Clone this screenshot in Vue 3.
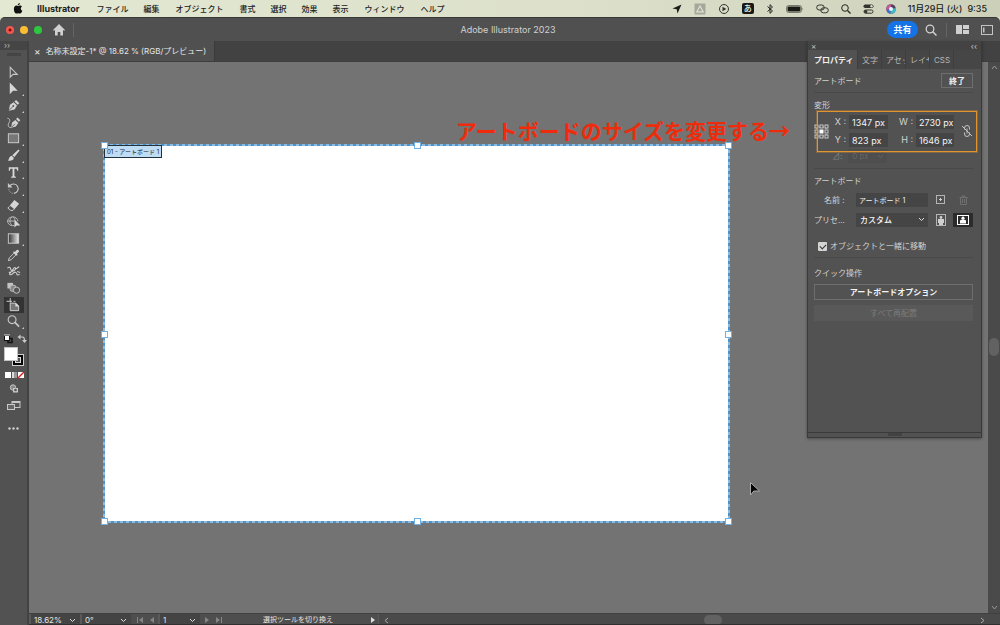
<script setup>
import { ref } from 'vue'

const menus = [
  { label: 'ファイル' },
  { label: '編集' },
  { label: 'オブジェクト', wide: true },
  { label: '書式' },
  { label: '選択' },
  { label: '効果' },
  { label: '表示' },
  { label: 'ウィンドウ', wide: true },
  { label: 'ヘルプ' },
]

const tools = [
  { name: '選択', art: '<path d="M4.500 2.500v10.500l3-3h4.500z" fill="none" stroke="#c8c8c8" stroke-width="1.100"/>' },
  { name: 'ダイレクト選択', more: true, art: '<path d="M4 1.500v12.500l3.500-3.500h5z" fill="#d6d6d6"/>' },
  { name: 'ペン', more: true, art: '<path d="M3 13.500l1.200-6.200 4-2.800 3.500 3.500-2.500 4.200-6.200 1.300z" fill="#d2d2d2"/><path d="M3.200 13.200l4.300-4.300" stroke="#555" stroke-width=".9"/><circle cx="7.800" cy="8.500" r="1" fill="#555"/><path d="M9 3.800l1.700-1.700 3.500 3.500-1.700 1.700z" fill="#d2d2d2"/>' },
  { name: '曲線', art: '<path d="M5.500 13.500l1-5.500 3.500-2.800 3.200 3.200-2.700 3.800z" fill="#d2d2d2"/><path d="M10.700 4.300l1.600-1.600 3 3-1.600 1.600z" fill="#d2d2d2"/><path d="M5.700 13.300l3.800-3.800" stroke="#555" stroke-width=".9"/><path d="M1.500 3.500c3 .5 3 2.500 1.800 4.500s-2 5.500 2.500 5.500" fill="none" stroke="#c4c4c4"/>' },
  { name: '長方形', more: true, art: '<rect x="2.500" y="3" width="11" height="9.500" fill="#777" stroke="#cfcfcf"/>' },
  { name: 'ブラシ', more: true, art: '<path d="M13.300 1.500l1.200 1.200-5.500 7-2.300-2zM6 8.300l2.300 2.200c0 3-3.300 3.500-6.300 3 1.500-1 1-4.500 4-5.200z" fill="#d6d6d6"/>' },
  { name: '文字', more: true, art: '<path d="M3 2.500h10v3.500h-1.200l-.5-2H9v8l1.500.5v1h-5v-1L7 12V4H4.700l-.5 2H3z" fill="#d8d8d8"/>' },
  { name: '回転', more: true, art: '<path d="M4 5.200a5 5 0 1 1 4.500 8" fill="none" stroke="#c8c8c8" stroke-width="1.200"/><path d="M2 2v5h5z" fill="#c8c8c8"/><path d="M3 8.500a5 5 0 0 0 5.500 4.700" fill="none" stroke="#b8b8b8" stroke-dasharray="1 1"/>' },
  { name: '消しゴム', more: true, art: '<path d="M9 2l5 4-5 6-5-4z" fill="#d6d6d6"/><path d="M3.700 8.800L2 10.800l3 2.400h2.500l1.200-1.400" fill="none" stroke="#d0d0d0"/>' },
  { name: 'シェイプ形成', art: '<path d="M9 12.200a5.500 4.700 0 1 1 3.700-4.500M1.500 7.500H9M6.500 3c-3 2-3 7 0 9.200M7.500 3c1.500 1 2 2 2 3" fill="none" stroke="#bcbcbc"/><path d="M9 5.500v9l2.200-2.200h4z" fill="#d6d6d6"/>' },
  { name: 'グラデーション', more: true, art: '<defs><linearGradient id="tg"><stop offset="0" stop-color="#333"/><stop offset="1" stop-color="#e8e8e8"/></linearGradient></defs><rect x="2.500" y="3" width="11" height="10" fill="url(#tg)" stroke="#cfcfcf"/>' },
  { name: 'スポイト', art: '<path d="M2.500 13.500l1-3L8.500 5.500l2 2-5 5z" fill="none" stroke="#cfcfcf"/><path d="M7.500 4.500l1-1 1 .8 2-2.300c1-.8 3 1.100 2.300 2L11.500 6.200l1 1-1 1z" fill="#d6d6d6"/>' },
  { name: 'パペットワープ', art: '<path d="M1.500 4.500c2-2 3-1 3.500 1s2 1.500 3-.5 2.500-1.500 2 0.500-4.500 2-6 4.500c-.5 2 1.500 2 3.500 0s3.500-1.500 4 .5c0 1.500 1.500 1.500 3 .5M9.500 6l4.500-3M3 9l4-1M12 8l3 1" fill="none" stroke="#cfcfcf" stroke-width="1.200"/>' },
  { name: 'ブレンド', art: '<rect x="1.500" y="2" width="6" height="6" fill="#c4c4c4"/><rect x="4.500" y="4.500" width="6" height="6.500" rx="2" fill="#888" stroke="#bdbdbd"/><circle cx="11.200" cy="9.800" r="3.300" fill="#555" stroke="#c8c8c8"/>' },
  { name: 'アートボード', active: true, art: '<path d="M4.500 0v5M.5 3.500h6M8 3.500h2" fill="none" stroke="#d0d0d0"/><path d="M4.500 5.500h6l3 3v5h-9z" fill="#777" stroke="#d8d8d8"/><path d="M10 5v4h4z" fill="#ddd"/>' },
  { name: 'ズーム', more: true, art: '<circle cx="6.500" cy="6" r="4.200" fill="none" stroke="#c8c8c8" stroke-width="1.200"/><path d="M9.500 9l4.500 4.500" stroke="#c8c8c8" stroke-width="1.800"/>' },
]

const x = ref('1347 px')
const y = ref('823 px')
const w = ref('2730 px')
const h = ref('1646 px')
const boardName = ref('アートボード 1')
const moveTogether = ref(true)
const handles = ['nw', 'n', 'ne', 'e', 'se', 's', 'sw', 'w']
const panelTabs = ['文字', 'アセッ', 'レイヤ', 'CSS']
</script>

<template>
  <div class="screen" lang="ja">
    <nav class="menubar">
      <svg class="apple" viewBox="0 0 20 24" aria-hidden="true"><path d="M14 0c.3 3-2 5-4.500 5C9.300 2.500 11.500.3 14 0zM10 6.500c1 0 2.300-1 4.300-1 2 0 3.500 1 4.400 2.300-4 2.400-3.300 7.600.8 9.200-1.200 3-3 6-5 6-1.500 0-2.300-.9-4-.9-1.800 0-2.700.9-4.200.9C3.500 23 1 18 1 13.500 1 8.500 3.600 5.600 6.500 5.600c1.500 0 2.700.9 3.500.9z" /></svg>
      <button class="app-name">Illustrator</button>
      <button v-for="m in menus" :key="m.label" :class="{ wide: m.wide }">{{ m.label }}</button>
      <div class="extras">
        <svg width="10" height="10" viewBox="0 0 10 10"><path d="M9.500.5L5.500 9.500 4.700 5.300.5 4.500z" fill="#1c1d18" /></svg>
        <svg width="12" height="12" viewBox="0 0 12 12"><rect x=".5" y=".5" width="11" height="11" rx="1" fill="#a5a79a" /><path d="M6 3L2.800 8.800h6.400z" fill="none" stroke="#dfe1d2" stroke-width="1.200" /></svg>
        <svg width="12" height="12" viewBox="0 0 12 12"><circle cx="6" cy="6" r="4.500" fill="none" stroke="#33342e" /><path d="M4.500 3.800v4.400L8.300 6z" fill="#33342e" /></svg>
        <span class="ime">あ</span>
        <svg width="8" height="12" viewBox="0 0 8 12"><path d="M1.500 3.500l5 4.500L4 10.300V1.700L6.500 4l-5 4.500" fill="none" stroke="#22231e" /></svg>
        <svg width="18" height="10" viewBox="0 0 18 10"><rect x=".5" y="1.500" width="15" height="7" rx="2" fill="none" stroke="#777a6c" /><rect x="1.500" y="2.500" width="13" height="5" rx="1" fill="#191a16" /><path d="M16.500 3.500q1.500 1.500 0 3z" fill="#777a6c" /></svg>
        <svg width="13" height="12" viewBox="0 0 13 12"><rect x=".7" y="2" width="7.500" height="5" rx="2.500" fill="none" stroke="#33342e" /><rect x="4.800" y="4.800" width="7.500" height="5" rx="2.500" fill="none" stroke="#33342e" /></svg>
        <svg width="10" height="10" viewBox="0 0 10 10"><circle cx="4" cy="4" r="3.300" fill="none" stroke="#22231e" /><path d="M6.500 6.500l3 3" stroke="#22231e" stroke-width="1.200" /></svg>
        <svg width="11" height="10" viewBox="0 0 11 10"><rect x=".5" y=".5" width="10" height="3.500" rx="1.700" fill="#33342e" /><circle cx="8.500" cy="2.200" r="1.200" fill="#dde0cc" /><rect x="1" y="6" width="9" height="3.200" rx="1.600" fill="none" stroke="#33342e" /><circle cx="2.800" cy="7.600" r="1.600" fill="#33342e" /></svg>
        <svg width="10" height="10" viewBox="0 0 10 10"><circle cx="5" cy="5" r="4.800" fill="#51405f" /><path d="M5 .2A4.800 4.800 0 0 0 .5 6L5 5z" fill="#c65a9c" /><path d="M9.700 4A4.800 4.800 0 0 1 4 9.700L5 5z" fill="#3bbcc4" /><path d="M.5 6A4.800 4.800 0 0 0 4 9.700L5 5z" fill="#4272d8" /><circle cx="5" cy="5" r="2" fill="#e9f1f6" /></svg>
        <span class="clock"><span>11月29日 (火)</span><time>9:35</time></span>
      </div>
    </nav>

    <div class="window">
      <header class="appbar">
        <div class="bar-left">
          <button class="light red" aria-label="閉じる"></button>
          <button class="light yellow" aria-label="しまう"></button>
          <button class="light green" aria-label="拡大"></button>
          <button class="home" aria-label="ホーム"><svg width="12" height="12" viewBox="0 0 12 12"><path d="M6 0l6 6-.8.8-1.200-.8V11.500H7.300V8H4.700v3.500H2V6l-1.200.8L0 6z" fill="#d0d0d0" /></svg></button>
          <i class="rule"></i>
        </div>
        <h1>Adobe Illustrator 2023</h1>
        <div class="bar-right">
          <button class="share">共有</button>
          <button aria-label="検索"><svg width="12" height="12" viewBox="0 0 12 12"><circle cx="5" cy="5" r="3.800" fill="none" stroke="#d0d0d0" stroke-width="1.300" /><path d="M7.800 7.800l3.700 3.700" stroke="#d0d0d0" stroke-width="1.500" /></svg></button>
          <i class="rule"></i>
          <button aria-label="ワークスペース"><svg width="13" height="9" viewBox="0 0 13 9"><path d="M0 0h6v9H0zM7 0h6v4H7zM7 5h6v4H7z" fill="#cfcfcf" /></svg></button>
          <button aria-label="表示切替"><svg width="12" height="10" viewBox="0 0 12 10"><rect x=".5" y=".5" width="11" height="9" fill="none" stroke="#c4c4c4" /><path d="M2 2.500h1.500v5H2z" fill="#c4c4c4" /></svg></button>
        </div>
      </header>

      <div class="workspace">
        <aside class="toolbar">
          <div class="expander">››</div>
          <div class="grip"></div>
          <div class="tools">
            <button v-for="t in tools" :key="t.name" :class="{ active: t.active, more: t.more }" :aria-label="t.name">
              <svg width="15" height="15" viewBox="0 0 16 16" v-html="t.art"></svg>
            </button>
          </div>
          <svg class="swatches" width="24" height="50" viewBox="0 0 24 50">
            <rect x="1.500" y="2.500" width="5" height="5" fill="#fff" stroke="#111" /><path d="M7 5.500h2v4H5V8" fill="none" stroke="#111" stroke-width="1.500" /><path d="M1 2h6" stroke="#ddd" />
            <path d="M16.500 4h3q2 0 2 3.500" fill="none" stroke="#c8c8c8" stroke-width="1.200" /><path d="M17.500 1.500v5l-3-2.500zM19 7h5l-2.500 3z" fill="#c8c8c8" />
            <rect x="9.500" y="21.500" width="11" height="11" fill="#050505" stroke="#cfcfcf" /><rect x="12.500" y="24.500" width="5" height="5" fill="#555" stroke="#ddd" />
            <rect x="1.500" y="14.500" width="13" height="13" fill="#fff" stroke="#c4c4c4" />
            <rect x="2" y="39" width="6" height="6" fill="#fff" /><rect x="9" y="39" width="5" height="6" fill="#999" /><path d="M9 39h2v6H9z" fill="#ddd" /><rect x="15" y="39" width="6" height="6" fill="#fff" /><path d="M15 45l6-6" stroke="#d8251d" stroke-width="1.500" />
          </svg>
          <svg width="10" height="9" viewBox="0 0 10 9"><circle cx="4" cy="3.500" r="2.700" fill="#888" stroke="#c4c4c4" /><rect x="4" y="4" width="5" height="4.500" fill="#c8c8c8" /><circle cx="6.500" cy="6" r="1.300" fill="#555" /></svg>
          <svg class="screens" width="14" height="10" viewBox="0 0 14 10"><rect x="5" y=".5" width="8" height="6" fill="#555" stroke="#c8c8c8" /><path d="M5 1.500h8" stroke="#c8c8c8" /><rect x=".5" y="3.500" width="7" height="5" fill="#666" stroke="#c8c8c8" /></svg>
          <svg width="11" height="3" viewBox="0 0 11 3"><circle cx="1.500" cy="1.500" r="1.200" fill="#d0d0d0" /><circle cx="5.500" cy="1.500" r="1.200" fill="#d0d0d0" /><circle cx="9.500" cy="1.500" r="1.200" fill="#d0d0d0" /></svg>
        </aside>

        <main class="document">
          <div class="tabs">
            <div class="tab"><button aria-label="ファイルを閉じる">×</button><span>名称未設定-1* @ 18.62 % (RGB/プレビュー)</span></div>
          </div>
          <div class="view">
            <div class="canvas">
              <div class="artboard">
                <svg class="outline" width="100%" height="100%">
                  <rect width="100%" height="100%" fill="none" stroke="#4a93cd" stroke-width="2" />
                  <rect width="100%" height="100%" fill="none" stroke="#cfe2ee" stroke-width="1" stroke-dasharray="3 3" />
                </svg>
                <span class="board-label">01 - アートボード 1</span>
                <i v-for="p in handles" :key="p" class="handle" :class="p"></i>
              </div>
              <p class="note">アートボードのサイズを変更する→</p>
              <svg class="pointer" width="12" height="16" viewBox="0 0 12 16"><path d="M1.500 1.500v12.500l3.300-4h5.700z" fill="#050505" stroke="#aaa" /></svg>
            </div>
            <div class="vscroll">
              <svg width="7" height="5" viewBox="0 0 7 5"><path d="M1 4l2.500-3L6 4" fill="none" stroke="#999" /></svg>
              <i class="thumb"></i>
              <svg width="7" height="5" viewBox="0 0 7 5"><path d="M1 1l2.500 3L6 1" fill="none" stroke="#999" /></svg>
            </div>
          </div>
          <footer class="status">
            <label class="zoomer"><select aria-label="ズーム"><option>18.62%</option></select><svg class="chev" viewBox="0 0 7 5"><path d="M1 1l2.500 2.500L6 1" /></svg></label>
            <label class="angle-view"><select aria-label="回転"><option>0°</option></select><svg class="chev" viewBox="0 0 7 5"><path d="M1 1l2.500 2.500L6 1" /></svg></label>
            <button disabled aria-label="最初"><svg width="7" height="6" viewBox="0 0 7 6"><path d="M0 0h1v6H0zM6 0v6L2 3z" fill="#858585" /></svg></button>
            <button disabled aria-label="前へ"><svg width="7" height="6" viewBox="0 0 7 6"><path d="M5 0v6L1 3z" fill="#858585" /></svg></button>
            <label class="page"><select aria-label="アートボード番号"><option>1</option></select><svg class="chev" viewBox="0 0 7 5"><path d="M1 1l2.500 2.500L6 1" /></svg></label>
            <button disabled aria-label="次へ"><svg width="7" height="6" viewBox="0 0 7 6"><path d="M2 0v6l4-3z" fill="#858585" /></svg></button>
            <button disabled aria-label="最後"><svg width="7" height="6" viewBox="0 0 7 6"><path d="M6 0h1v6H6zM1 0v6l4-3z" fill="#858585" /></svg></button>
            <span class="hint">選択ツールを切り換え</span>
            <button aria-label="ステータス表示"><svg width="7" height="6" viewBox="0 0 7 6"><path d="M2 0v6l4-3z" fill="#e0e0e0" /></svg></button>
            <div class="hscroll">
              <svg width="5" height="7" viewBox="0 0 5 7"><path d="M4 1L1 3.500 4 6" fill="none" stroke="#aaa" /></svg>
              <i class="thumb"></i>
              <svg width="5" height="7" viewBox="0 0 5 7"><path d="M1 1l3 2.500L1 6" fill="none" stroke="#aaa" /></svg>
            </div>
          </footer>
        </main>

        <section class="panel">
          <div class="panel-top"><button aria-label="パネルを閉じる">×</button><button aria-label="折りたたむ">‹‹</button></div>
          <div class="panel-tabs">
            <button class="on">プロパティ</button>
            <button v-for="t in panelTabs" :key="t"><span>{{ t }}</span></button>
          </div>
          <div class="panel-body">
            <div class="block head"><span>アートボード</span><button class="done">終了</button></div>
            <div class="block transform">
              <h2>変形</h2>
              <div class="fields">
                <svg class="anchor" width="15" height="15" viewBox="0 0 15 15"><g fill="none" stroke="#c8c8c8"><path d="M3 3h9v9H3z" stroke-dasharray="1 1" /><g fill="#505050"><rect x="1" y="1" width="3" height="3" /><rect x="6" y="1" width="3" height="3" /><rect x="11" y="1" width="3" height="3" /><rect x="1" y="6" width="3" height="3" /><rect x="11" y="6" width="3" height="3" /><rect x="1" y="11" width="3" height="3" /><rect x="6" y="11" width="3" height="3" /><rect x="11" y="11" width="3" height="3" /></g></g><rect x="5.500" y="5.500" width="4" height="4" fill="#fff" /></svg>
                <label for="fx">X :</label><input id="fx" v-model="x">
                <label for="fw">W :</label><input id="fw" v-model="w">
                <svg class="link" width="12" height="14" viewBox="0 0 12 14"><path d="M3.500 5.500V4q0-2.500 2.500-2.500T8.500 4v1.500M3.500 8.500V10q0 2.500 2.500 2.500T8.500 10V8.500M6 4.500v5M1 2l10 10" fill="none" stroke="#c4c4c4" /></svg>
                <label for="fy">Y :</label><input id="fy" v-model="y">
                <label for="fh">H :</label><input id="fh" v-model="h">
                <i class="highlight"></i>
              </div>
              <div class="rotate"><label for="fa">⊿:</label><span class="pick"><select id="fa" disabled><option>0 px</option></select><svg class="chev" viewBox="0 0 7 5"><path d="M1 1l2.500 2.500L6 1" /></svg></span></div>
            </div>
            <div class="block board">
              <h2>アートボード</h2>
              <div class="row"><label for="bn">名前 :</label><input id="bn" v-model="boardName">
                <button class="mini" aria-label="新規"><svg width="9" height="9" viewBox="0 0 9 9"><rect x=".5" y=".5" width="8" height="8" fill="none" stroke="#b4b4b4" /><path d="M4.500 3v3M3 4.500h3" stroke="#d0d0d0" /></svg></button>
                <button class="mini last" disabled aria-label="削除"><svg width="9" height="10" viewBox="0 0 9 10"><path d="M.5 2.500h8M3 2V1h3v1M1.500 3v6.500h6V3M3.500 4v4M5.500 4v4" fill="none" stroke="#707070" /></svg></button>
              </div>
              <div class="row preset"><label for="bp">プリセ...</label><span class="pick"><select id="bp"><option>カスタム</option></select><svg class="chev" viewBox="0 0 7 5"><path d="M1 1l2.500 2.500L6 1" /></svg></span>
                <button class="mini" aria-label="縦"><svg width="10" height="12" viewBox="0 0 10 12"><rect x=".5" y=".5" width="9" height="11" fill="none" stroke="#b4b4b4" /><circle cx="5" cy="3.500" r="1.400" fill="#d0d0d0" /><path d="M2 5h6v4H7v2H3V9H2z" fill="#d0d0d0" /></svg></button>
                <button class="mini last chosen" aria-label="横"><svg width="12" height="10" viewBox="0 0 12 10"><rect x=".5" y=".5" width="11" height="9" fill="none" stroke="#fff" /><circle cx="6" cy="3.200" r="1.600" fill="#fff" /><path d="M3 8.500V6q0-1.500 3-1.500T9 6v2.500z" fill="#fff" /></svg></button>
              </div>
              <label class="check"><input v-model="moveTogether" type="checkbox"><span>オブジェクトと一緒に移動</span></label>
            </div>
            <div class="block quick">
              <h2>クイック操作</h2>
              <button class="action">アートボードオプション</button>
              <button class="action off" disabled>すべて再配置</button>
            </div>
          </div>
          <div class="panel-foot"><i></i></div>
        </section>
      </div>
    </div>
  </div>
</template>

<style>
body { background: #2c2c2c; }
</style>

<style scoped>
* { box-sizing: border-box; }
.screen { height: 100vh; display: flex; flex-direction: column; overflow: hidden; background: #dfe3cc; color: #d6d6d6; font-family: Inter, "Noto Sans CJK JP", sans-serif; font-size: 8px; line-height: 12px; }
button, input, select { font: inherit; color: inherit; background: none; border: 0; padding: 0; margin: 0; outline: 0; border-radius: 0; appearance: none; min-width: 0; }
button { display: block; white-space: nowrap; }
svg { display: block; flex: none; }
h1, h2, p { margin: 0; font-weight: 400; font-size: inherit; }

.menubar { height: 17px; flex: none; display: flex; align-items: center; gap: 15px; padding: 0 13px; background: linear-gradient(90deg, #e3e8d2, #dce0cb 60%, #cdd0b9); color: #20211c; font-weight: 500; }
.apple { width: 10px; height: 11px; fill: #111; margin-right: -1px; }
.app-name { font-weight: 700; font-size: 9px; padding-right: 2px; }
.wide { padding: 0 1px; }
.extras { margin-left: auto; display: flex; align-items: center; gap: 12px; }
.ime { width: 12px; height: 11px; border-radius: 2px; background: #181915; color: #f0f2e4; text-align: center; line-height: 11px; }
.clock { display: flex; gap: 5px; font-size: 9px; white-space: nowrap; }

.window { flex: 1; min-height: 0; display: flex; flex-direction: column; border-radius: 5px 5px 0 0; overflow: hidden; background: #505050; border-top: 1px solid #383838; }
.appbar { height: 23px; flex: none; display: grid; grid-template-columns: 1fr auto 1fr; align-items: center; padding-left: 6px; }
.appbar h1 { font-size: 9px; padding-left: 10px; color: #d0d0d0; }
.bar-left, .bar-right { display: flex; align-items: center; }
.bar-left { gap: 6px; }
.light { width: 8px; height: 8px; border-radius: 50%; }
.red { background: radial-gradient(circle, #8a0c08 0 1px, #f4574e 2px); }
.yellow { background: #fabd33; }
.green { background: #2dc840; }
.home { margin: 0 2px 0 5px; }
.rule { width: 1px; height: 14px; background: #656565; }
.bar-right { justify-content: flex-end; padding-right: 7px; gap: 9px; }
.bar-right button:last-child { margin-left: 3px; }
.bar-right .share { width: 31px; height: 17px; margin-right: -2px; border-radius: 9px; background: #1473e6; color: #fff; font-weight: 700; font-size: 9px; }

.workspace { flex: 1; min-height: 0; display: flex; position: relative; }
.toolbar { width: 29px; flex: none; background: #525252; border-right: 2px solid #424242; display: flex; flex-direction: column; align-items: center; }
.expander { align-self: stretch; height: 9px; padding-left: 4px; line-height: 8px; background: #454545; color: #bbb; }
.grip { width: 14px; height: 3px; margin: 3px 0 8px; background: #454545; }
.tools { height: 266px; width: 20px; display: grid; grid-auto-rows: 1fr; }
.tools button { display: grid; place-items: center; position: relative; }
.tools .active { background: #333; }
.more::after { content: ""; position: absolute; right: 0; bottom: 1px; border: 1px solid #ccc; border-left-color: transparent; border-top-color: transparent; }
.swatches { margin: 3px 0 1px 2px; }
.screens { margin: 8px 0 16px; }

.document { flex: 1; min-width: 0; display: flex; flex-direction: column; }
.tabs { height: 21px; flex: none; background: #424242; border-bottom: 1px solid #3e3e3e; display: flex; }
.tab { background: #505050; padding: 0 8px 0 5px; display: flex; align-items: center; gap: 5px; color: #e6e6e6; white-space: nowrap; border-right: 1px solid #3b3b3b; }
.tab button { font-size: 10px; }
.view { flex: 1; min-height: 0; display: flex; }
.canvas { flex: 1; position: relative; background: #737373; overflow: hidden; }
.artboard { position: absolute; left: 75px; top: 83px; width: 625px; height: 377px; background: #fff; }
.outline { position: absolute; inset: 0; overflow: visible; }
.board-label { position: absolute; left: 0; top: 0; height: 13px; padding: 0 2px; border: 1px solid #22303c; background: #bfdcf5; color: #15202a; font-size: 6px; line-height: 11px; white-space: nowrap; }
.handle { position: absolute; width: 5px; height: 5px; margin: -2px; background: #fff; outline: 1px solid #70b0e2; }
.nw, .n, .ne { top: 0; }
.sw, .s, .se { bottom: 0; }
.nw, .w, .sw { left: 0; }
.ne, .e, .se { right: 0; }
.n, .s { left: 50%; }
.e, .w { top: 50%; }
.note { position: absolute; left: 427px; top: 53px; color: #ee2c0c; font: 700 21px/30px "Noto Sans CJK JP", sans-serif; white-space: nowrap; }
.pointer { position: absolute; left: 720px; top: 419px; }
.vscroll { width: 12px; flex: none; background: #4a4a4a; display: flex; flex-direction: column; align-items: center; justify-content: space-between; padding: 3px 0; }
.vscroll .thumb { width: 10px; height: 18px; border-radius: 5px; background: #626262; margin-top: 18px; }

.status { height: 12px; flex: none; overflow: hidden; display: flex; align-items: flex-start; background: #4e4e4e; border-top: 1px solid #404040; border-bottom: 1px solid #303030; color: #e4e4e4; }
.status label { display: flex; align-items: center; height: 12px; padding-right: 4px; border-left: 2px solid #5a5a5a; background: #444; }
.status label select { flex: 1; padding-left: 3px; line-height: 12px; height: 12px; }
.zoomer { width: 51px; }
.angle-view { width: 51px; }
.page { width: 42px; }
.status button { width: 12px; height: 12px; display: grid; place-items: center; }
.zoomer + .angle-view + button { margin-left: 3px; }
.hint { width: 142px; padding-left: 6px; text-align: center; font-size: 7px; }
.hscroll { flex: 1; height: 12px; display: flex; align-items: center; justify-content: space-between; padding: 0 15px 0 5px; background: #4a4a4a; border-left: 1px solid #5a5a5a; }
.hscroll .thumb { width: 18px; height: 10px; border-radius: 5px; background: #626262; margin-left: 56px; }
.chev { width: 7px; height: 5px; fill: none; stroke: #dcdcdc; }

.panel { position: absolute; top: 0; right: 18px; width: 175px; background: #525252; border: 1px solid #3a3a3a; border-top: 0; box-shadow: 0 1px 3px #0005; display: flex; flex-direction: column; }
.panel-top { height: 9px; background: #434343; display: flex; justify-content: space-between; align-items: center; padding: 0 4px 0 3px; color: #c8c8c8; }
.panel-tabs { height: 19px; background: #464646; display: flex; color: #b8b8b8; }
.panel-tabs button { width: 24px; padding-left: 4px; border-right: 1px solid #3e3e3e; text-align: left; }
.panel-tabs button span { display: block; overflow: hidden; }
.panel-tabs .on { width: 50px; background: #525252; color: #f0f0f0; font-weight: 700; padding-left: 6px; }
.panel-body { height: 363px; padding: 0 8px 0 6px; color: #d2d2d2; }
.block { border-bottom: 1px solid #494949; }
.head { height: 24px; display: flex; justify-content: space-between; align-items: center; }
.done { width: 32px; height: 15px; border: 1px solid #6e6e6e; color: #f0f0f0; font-weight: 700; }
.transform { height: 76px; padding-top: 6px; }
.fields { display: grid; grid-template-columns: 15px 20px 39px 28px 38px 1fr; grid-template-rows: 14px 14px; row-gap: 4px; align-items: center; margin-top: 4px; position: relative; font-size: 9px; }
.fields label { text-align: right; padding-right: 3px; white-space: nowrap; }
.fields input { width: 100%; height: 14px; background: #454545; color: #f4f4f4; padding-left: 3px; }
.anchor { grid-row: 1 / 3; grid-column: 1; }
.link { grid-row: 1 / 3; grid-column: 6; justify-self: end; }
.highlight { position: absolute; left: 3px; right: -4px; top: -4px; bottom: -5px; border: 1px solid #e2942e; outline: 1px solid #e2942e55; }
.rotate { display: flex; align-items: center; margin-top: 2px; height: 14px; color: #858585; padding-left: 18px; gap: 6px; }
.rotate .pick { width: 39px; color: #656565; background: #4e4e4e; }
.rotate .chev { stroke: #656565; }
.pick { display: flex; align-items: center; height: 14px; padding-right: 3px; background: #454545; }
.pick select { flex: 1; padding-left: 4px; opacity: 1; }
.board { height: 89px; padding-top: 6px; }
.row { display: flex; align-items: center; height: 15px; margin-top: 5px; }
.row label { width: 42px; padding-left: 10px; white-space: nowrap; flex: none; }
.row input, .row .pick { width: 72px; height: 14px; background: #454545; color: #f4f4f4; }
.row input { padding-left: 3px; font-size: 7px; }
.row .pick { font-weight: 500; }
.row.preset label { padding-left: 0; }
.mini { width: 17px; height: 14px; display: grid; place-items: center; margin-left: 4px; }
.mini.last { width: 20px; margin-left: 4px; }
.chosen { background: #2b2b2b; }
.check { display: flex; align-items: center; gap: 3px; height: 12px; margin: 13px 0 0 4px; white-space: nowrap; }
.check input { width: 9px; height: 9px; border-radius: 1px; background: #d4d4d4; display: grid; place-items: center; }
.check input:checked::after { content: ""; width: 5px; height: 3px; border: solid #333; border-width: 0 0 1px 1px; transform: rotate(-45deg); }
.quick { border: 0; padding-top: 9px; }
.action { width: 100%; height: 16px; margin-top: 5px; border: 1px solid #6e6e6e; color: #f4f4f4; font-weight: 700; }
.action.off { background: #595959; border: 0; color: #7c7c7c; font-weight: 400; }
.panel-foot { height: 5px; border-top: 1px solid #3a3a3a; display: grid; justify-content: center; }
.panel-foot i { width: 14px; height: 3px; background: #424242; }
</style>
